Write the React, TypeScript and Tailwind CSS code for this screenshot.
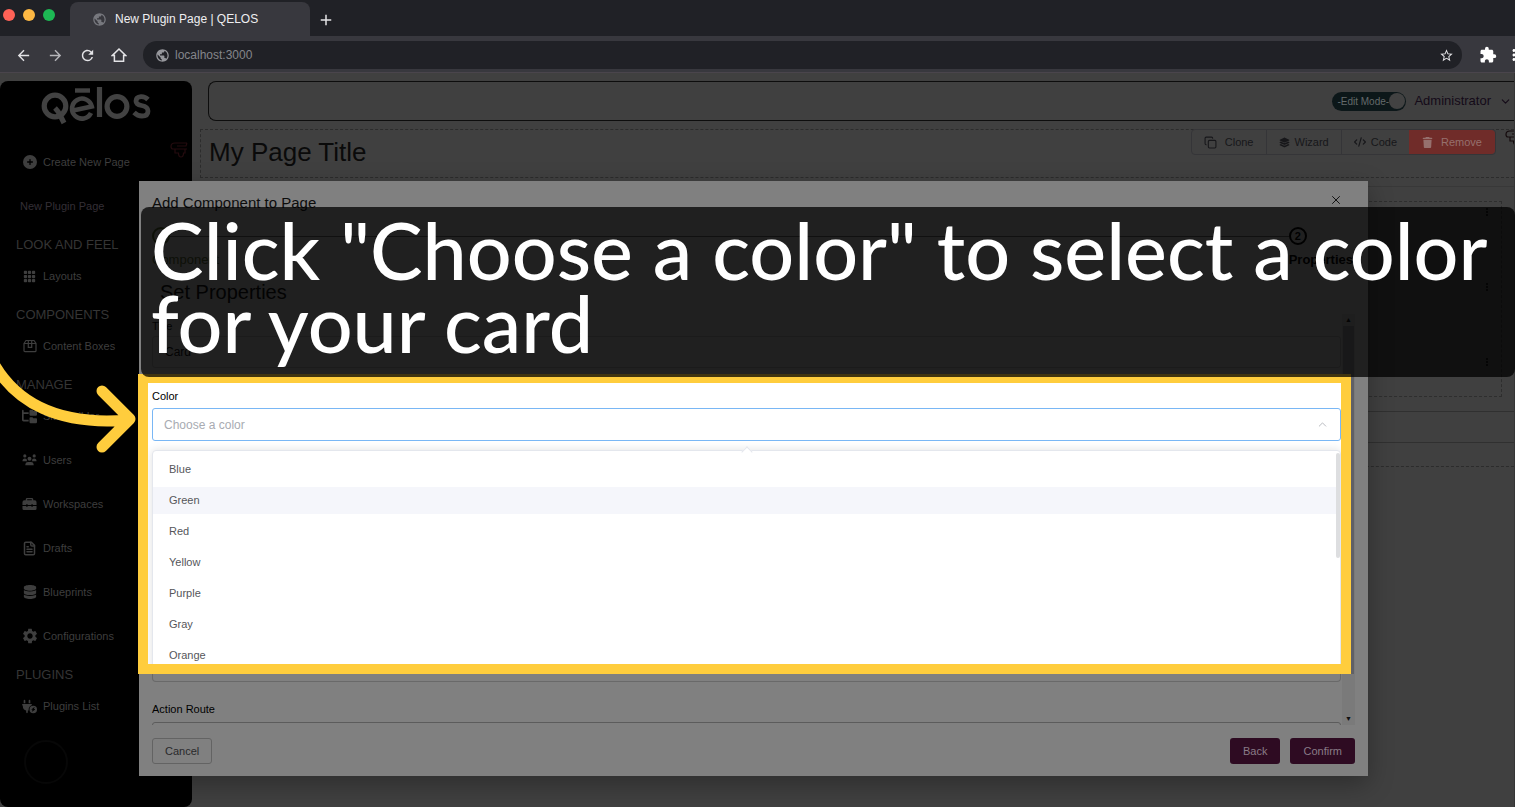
import React, { useState } from "react";
import {
  MdPublic, MdExtension, MdStarBorder, MdArrowBack, MdArrowForward, MdRefresh, MdMoreVert, MdSettings, MdAdd,
} from "react-icons/md";
import {
  FaCirclePlus, FaFolderTree, FaDatabase, FaPlugCircleBolt, FaLayerGroup, FaCode, FaTrash,
} from "react-icons/fa6";
import { BsGrid3X3GapFill } from "react-icons/bs";
import { LuCopy, LuChevronDown, LuChevronUp, LuX, LuFileText } from "react-icons/lu";

function HomeIcon() {
  return (
    <svg viewBox="0 0 16 16" className="h-4 w-4" fill="none" stroke="currentColor" strokeWidth="1.5">
      <path d="M1.2 8.6 8 2l6.800 6.600H12.600V14.200H3.400V8.600z" />
    </svg>
  );
}

function BoxIcon() {
  return (
    <svg viewBox="0 0 14 14" className="h-[14px] w-[14px]" fill="none" stroke="currentColor" strokeWidth="1.2">
      <path d="M1 4.500 3 1.500h8l2 3v7.200a1 1 0 0 1-1 1H2a1 1 0 0 1-1-1zM1 4.500h12M5.300 1.500v6.800h3.400V1.500" />
    </svg>
  );
}

function UsersIcon() {
  return (
    <svg viewBox="0 0 16 14" className="h-[14px] w-4" fill="currentColor">
      <circle cx="3" cy="2.600" r="1.700" />
      <circle cx="13" cy="2.600" r="1.700" />
      <circle cx="8" cy="5.600" r="2.100" />
      <path d="M.500 8.200Q.500 5.400 3 5.400q1.200 0 1.900.600Q4.900 7.400 5.700 8.200zM15.500 8.200Q15.500 5.400 13 5.400q-1.200 0-1.900.600Q11.100 7.400 10.300 8.200zM3.500 12.600Q3.500 9 6.500 9h3q3 0 3 3.600z" />
    </svg>
  );
}

function BriefcaseIcon() {
  return (
    <svg viewBox="0 0 16 14" className="h-[14px] w-4" fill="currentColor">
      <path d="M4 3V2Q4 .500 5.500.500h5Q12 .500 12 2v1h1.500Q15.500 3 15.500 5v3h-4V7.200H10V8H6V7.200H4.500V8h-4V5q0-2 2-2zM5.500 3h5V2h-5zM.500 9.200h4V10H6V9.200h4V10h1.500V9.200h4V12q0 1.500-1.500 1.500H2Q.500 13.500.500 12z" fillRule="evenodd" />
    </svg>
  );
}

function RollerIcon({ className }: { className: string }) {
  return (
    <svg viewBox="0 0 18 18" className={className} fill="none" stroke="currentColor" strokeWidth="1.2">
      <path d="M17 2H5Q1 2 1 5.500q0 2.500 2 2.500h14M7 5h9l1-3M5 8v4h3.500q0 4 2.500 4t2.500-4H15V8" />
    </svg>
  );
}

function Logo() {
  return (
    <svg viewBox="0 0 110 40" className="h-10 w-[110px]" fill="none" stroke="#424242" strokeWidth="5.200" role="img" aria-label="Qelos">
      <circle cx="14" cy="20" r="10.800" />
      <path d="M14 22q3 3 5 7l4 8" />
      <path d="M34 4.500h15" strokeWidth="4.400" />
      <path d="M50 27a10 10 0 1 1 .800-6.500L32 24.500" strokeWidth="4.600" />
      <path d="M58.500 1v30" />
      <circle cx="76" cy="20.500" r="9.900" />
      <path d="M107 13.500q-3-3-7-2.800-5 .500-5 4.300 0 3.500 5.500 4.500 6.500 1.200 6.500 5.500 0 5-6 5-4.500 0-8-3.500" strokeWidth="4.800" />
    </svg>
  );
}

type Item = { label: string; icon: React.ReactNode };
const groups: { title: string; items: Item[] }[] = [
  { title: "LOOK AND FEEL", items: [{ label: "Layouts", icon: <BsGrid3X3GapFill size={13} /> }] },
  { title: "COMPONENTS", items: [{ label: "Content Boxes", icon: <BoxIcon /> }] },
  {
    title: "MANAGE",
    items: [
      { label: "Site Builder", icon: <FaFolderTree size={15} /> },
      { label: "Users", icon: <UsersIcon /> },
      { label: "Workspaces", icon: <BriefcaseIcon /> },
      { label: "Drafts", icon: <LuFileText size={15} strokeWidth={2.4} /> },
      { label: "Blueprints", icon: <FaDatabase size={14} /> },
      { label: "Configurations", icon: <MdSettings size={18} className="shrink-0" /> },
    ],
  },
  { title: "PLUGINS", items: [{ label: "Plugins List", icon: <FaPlugCircleBolt size={15} /> }] },
];

function NavItem({ label, icon }: Item) {
  return (
    <a href="#" className="flex h-11 items-center gap-[6px] pl-[22px] text-[11px] text-[#3e3e3e]">
      <span className="flex w-[15px] justify-center">{icon}</span>
      {label}
    </a>
  );
}

function BrowserChrome() {
  return (
    <header className="text-[#e3e3e6]">
      <div className="flex h-9 bg-[#202126]">
        <div className="flex w-[70px] gap-2 pl-[3px] pt-[9px]">
          <span className="h-3 w-3 rounded-full bg-[#ff6257]" />
          <span className="h-3 w-3 rounded-full bg-[#fdb843]" />
          <span className="h-3 w-3 rounded-full bg-[#1db954]" />
        </div>
        <div className="mt-[2px] flex w-60 items-center gap-2 rounded-t-lg bg-[#38383e] pl-[22px] text-xs text-[#efeff1]">
          <MdPublic size={15} className="text-[#77787e]" />
          New Plugin Page | QELOS
        </div>
        <button aria-label="New tab" className="flex w-8 items-center justify-center pt-[3px]">
          <MdAdd size={18} />
        </button>
      </div>
      <div className="flex h-[37px] items-center border-b border-[#4a454c] bg-[#38383e] pl-[15px] pt-[2px]">
        <div className="flex w-32 items-center gap-[15px]">
          <button aria-label="Back"><MdArrowBack size={17} /></button>
          <button aria-label="Forward" className="text-[#b5b5b9]"><MdArrowForward size={17} /></button>
          <button aria-label="Reload"><MdRefresh size={17} /></button>
          <button aria-label="Home"><HomeIcon /></button>
        </div>
        <div className="flex h-7 flex-1 items-center gap-[5px] rounded-full bg-[#202126] pl-3 pr-2">
          <MdPublic size={15} className="text-[#96979c]" />
          <input aria-label="Address" defaultValue="localhost:3000" className="min-w-0 flex-1 bg-transparent text-xs text-[#85868b] outline-none" />
          <MdStarBorder size={15} />
        </div>
        <div className="flex w-[53px] items-center gap-2 overflow-hidden pl-[17px]">
          <MdExtension size={18} className="shrink-0 text-white" />
          <MdMoreVert size={18} className="shrink-0 text-white" />
        </div>
      </div>
    </header>
  );
}

function Sidebar() {
  return (
    <nav className="mt-2 flex w-48 shrink-0 flex-col rounded-lg bg-black">
      <div className="flex h-[59px] justify-center pt-[5px]"><Logo /></div>
      <div className="flex items-center justify-between pr-1">
        <NavItem label="Create New Page" icon={<FaCirclePlus size={14} />} />
        <RollerIcon className="mb-6 h-[18px] w-[18px] text-[#240b0e]" />
      </div>
      <a href="#" className="flex h-11 items-center pl-5 text-[11px] text-[#342f36]">New Plugin Page</a>
      {groups.map((g) => (
        <div key={g.title}>
          <h2 className="h-[26px] pl-4 pt-[7px] text-[13px] leading-5 text-[#353535]">{g.title}</h2>
          {g.items.map((i) => <NavItem key={i.label} {...i} />)}
        </div>
      ))}
      <span className="ml-6 mt-3 h-11 w-11 rounded-full border-2 border-[#070707]" />
    </nav>
  );
}

function MainArea() {
  return (
    <main className="min-w-0 flex-1 border-r border-[#353535] pl-2 pt-2">
      <div className="ml-2 flex h-10 items-center justify-end gap-2 rounded-l-lg border border-r-0 border-[#0d0d0d] pr-[2px]">
        <button role="switch" aria-checked="true" className="flex h-[19px] w-[74px] items-center justify-between rounded-full bg-[#0c1719] pl-[5px] pr-px text-[10px] text-[#646a6b]">
          -Edit Mode-
          <span className="h-4 w-4 shrink-0 rounded-full bg-[#424242]" />
        </button>
        <button className="flex items-center gap-2 text-[13px] text-[#140a18]">
          Administrator <LuChevronDown size={13} />
        </button>
      </div>
      <section className="mt-2 flex h-[49px] items-start justify-between border-y border-l border-dashed border-[#2c2c2c]">
        <h1 className="pl-2 pt-1 text-[26px] leading-9 text-[#0a0a0a]">My Page Title</h1>
        <div className="-mt-px flex text-[11px] text-[#17171a]">
          <div className="flex h-[26px] rounded-sm border border-[#353538]">
            <button className="flex items-center gap-2 border-r border-[#353538] px-3"><LuCopy size={13} />Clone</button>
            <button className="flex items-center gap-[5px] border-r border-[#353538] px-3"><FaLayerGroup size={11} />Wizard</button>
            <button className="flex items-center gap-[5px] px-3"><FaCode size={12} />Code</button>
            <button className="flex items-center gap-2 rounded-r-sm bg-[#702c29] px-[13px] text-[#96706d]"><FaTrash size={11} />Remove</button>
          </div>
          <div className="w-[18px] overflow-hidden pl-[9px]"><RollerIcon className="h-[18px] w-[18px] text-[#140a0c]" /></div>
        </div>
      </section>
      <div className="mt-2 h-[225px] border-t border-[#383838] pr-3 pt-[14px]">
        <div className="flex h-[196px] flex-col items-end gap-[63px] border border-dashed border-[#2e2e2e] pr-2 pt-1 text-[#0c0c0c]">
          <MdMoreVert size={12} /><MdMoreVert size={12} /><MdMoreVert size={12} />
        </div>
      </div>
      <div className="h-8 border-y border-[#303030]" />
      <div className="h-6 border-b border-dashed border-[#2c2c2c]" />
    </main>
  );
}

const colors = ["Blue", "Green", "Red", "Yellow", "Purple", "Gray", "Orange"];

function ColorField() {
  const [color, setColor] = useState("");
  return (
    <div className="relative z-10 -ml-px mr-[17px] h-[300px] overflow-hidden border-[10px] border-t-[9px] border-[#ffcd3d] bg-white pl-1">
      <label htmlFor="color" className="block pt-[5px] text-[11px] leading-4 text-black">Color</label>
      <div className="mt-1 flex h-[33px] items-center rounded-[3px] border border-[#79b7f5] px-[11px] text-[#a8abb2]">
        <input id="color" value={color} readOnly placeholder="Choose a color" className="min-w-0 flex-1 bg-transparent text-xs outline-none placeholder:text-[#a8abb2]" />
        <LuChevronUp size={13} strokeWidth={1.5} />
      </div>
      <div className="relative mt-[9px] h-[230px] rounded-t border border-[#e4e7ed] bg-white pt-[5px] shadow-[0_0_10px_rgba(0,0,0,0.12)]">
        <span className="absolute -top-[3px] left-1/2 -ml-1 h-2 w-2 rotate-45 border-l border-t border-[#e4e7ed] bg-white" />
        <ul className="flex flex-col gap-1" role="listbox" aria-label="Color options">
          {colors.map((c) => (
            <li key={c} role="option" aria-selected={c === color} onClick={() => setColor(c)}
              className={c === "Green" ? "h-[27px] bg-[#f5f6fb] pl-4 text-[11px] leading-[27px] text-[#55565a]" : "h-[27px] pl-4 text-[11px] leading-[27px] text-[#55565a]"}>
              {c}
            </li>
          ))}
        </ul>
        <span className="absolute right-0 top-[2px] h-[105px] w-1 rounded-sm bg-[#dddee0]" />
      </div>
    </div>
  );
}

function ComponentDialog() {
  return (
    <div role="dialog" aria-label="Add Component to Page" className="absolute left-[139px] right-[147px] top-[181px] flex h-[595px] flex-col bg-[#808080] text-[#0c0c0c] shadow-[0_8px_24px_rgba(0,0,0,0.3)]">
      <div className="flex items-start justify-between pl-[13px] pr-[25px] pt-3">
        <h2 className="text-[15px] leading-5">Add Component to Page</h2>
        <button aria-label="Close"><LuX size={14} strokeWidth={1.6} /></button>
      </div>
      <div className="flex items-start justify-between pl-[13px] pr-[15px] pt-[14px] text-[13px] leading-[18px]">
        <div className="flex w-[18px] flex-col gap-[6px] text-[#35401f]">
          <span className="flex h-[18px] w-[18px] items-center justify-center rounded-full border-2 border-[#35401f] text-[11px]">1</span>
          <span>Component</span>
        </div>
        <div className="mt-[9px] h-px flex-1 bg-[#404040]" />
        <div className="flex flex-col gap-[6px] font-bold text-black">
          <span className="flex h-[18px] w-[18px] items-center justify-center rounded-full border-2 border-black text-[11px]">2</span>
          <span>Properties</span>
        </div>
      </div>
      <h3 className="pl-[21px] pt-[9px] text-xl leading-7">Set Properties</h3>
      <div className="relative flex-1 pt-[10px]">
        <div className="absolute bottom-0 right-[13px] top-2 flex w-[13px] flex-col items-center justify-between bg-[#7a7a7a] text-[7px] leading-3 text-[#111]">
          <span>▲</span>
          <span className="w-[11px] flex-1 bg-[#606066]" />
          <span className="h-[51px] bg-[#7a7a7a] pt-[39px]">▼</span>
        </div>
        <label htmlFor="title" className="block pl-[13px] text-[11px] leading-5">Title</label>
        <div className="pl-[13px] pr-[27px]">
          <input id="title" defaultValue="Card" className="block h-8 w-full rounded-[3px] border border-[#6c6c6c] bg-transparent px-3 text-xs outline-none" />
        </div>
        <div className="pt-[6px]"><ColorField /></div>
        <div className="pl-[13px] pr-[27px]">
          <div className="h-2 rounded-b border border-t-0 border-[#696969]" />
          <label htmlFor="route" className="block pt-[19px] text-[11px] leading-4 text-black">Action Route</label>
          <div className="mt-[5px] h-[3px] overflow-hidden">
            <input id="route" className="block h-8 w-full rounded-[3px] border border-[#5c5c5c] bg-transparent" />
          </div>
        </div>
      </div>
      <div className="flex items-center gap-[10px] pb-3 pl-[13px] pr-[13px] pt-[13px] text-[11px]">
        <button className="mr-auto h-[26px] rounded-[3px] border border-[#636363] px-3 text-[#29292b]">Cancel</button>
        <button className="h-[26px] rounded-[3px] bg-[#2e0b22] px-[13px] text-[#8a7c87]">Back</button>
        <button className="h-[26px] rounded-[3px] bg-[#2e0b22] px-[13px] text-[#8a7c87]">Confirm</button>
      </div>
    </div>
  );
}

export default function App() {
  return (
    <div className="relative flex min-h-screen flex-col overflow-hidden bg-[#404040] font-['Liberation_Sans',Arial,sans-serif]">
      <BrowserChrome />
      <div className="flex flex-1">
        <Sidebar />
        <MainArea />
      </div>
      <ComponentDialog />
      <p className="absolute left-[141px] right-0 top-[207px] z-20 h-[170px] rounded-lg bg-black/75 pl-[10px] pt-[6px] font-['Lato',sans-serif] text-[79px] font-medium leading-[73px] text-white">
        Click "Choose a color" to select a color for your card
      </p>
      <svg viewBox="0 0 140 100" className="absolute left-0 top-[360px] z-20 h-[100px] w-[140px]" fill="none" stroke="#ffcd3d" strokeWidth="11" strokeLinecap="round" strokeLinejoin="round">
        <path d="M-6 4C16 42 58 66 128 60M102 31l28 28-28 28" />
      </svg>
    </div>
  );
}
